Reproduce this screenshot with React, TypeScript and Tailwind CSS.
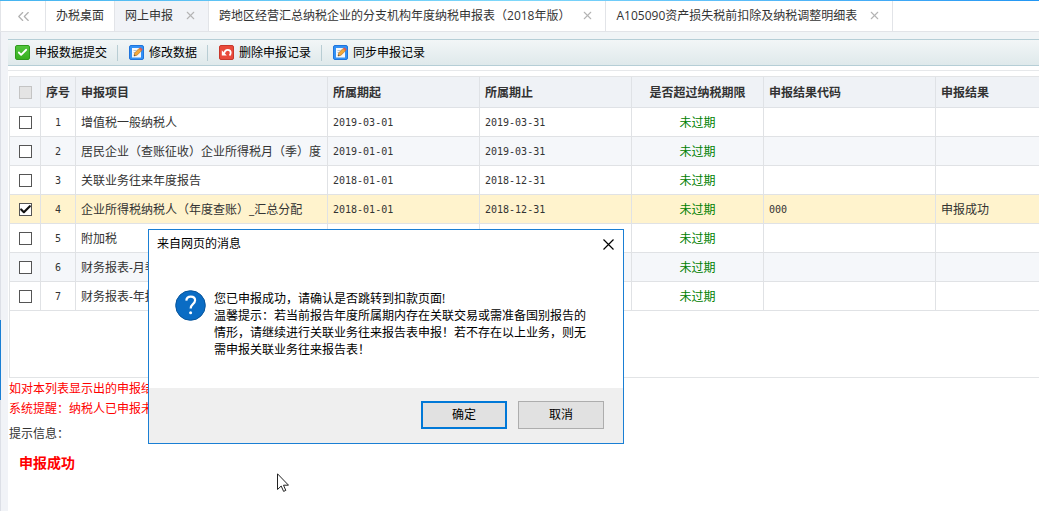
import { useState } from 'react';
import { Check, ChevronsLeft, X } from 'lucide-react';

const tabs = [
  { title: '办税桌面', closable: false },
  { title: '网上申报', closable: true },
  { title: '跨地区经营汇总纳税企业的分支机构年度纳税申报表（2018年版）', closable: true },
  { title: 'A105090资产损失税前扣除及纳税调整明细表', closable: true },
];

const rows = [
  { id: 1, name: '增值税一般纳税人', start: '2019-03-01', end: '2019-03-31', code: '', result: '' },
  { id: 2, name: '居民企业（查账征收）企业所得税月（季）度', start: '2019-01-01', end: '2019-03-31', code: '', result: '' },
  { id: 3, name: '关联业务往来年度报告', start: '2018-01-01', end: '2018-12-31', code: '', result: '' },
  { id: 4, name: '企业所得税纳税人（年度查账）_汇总分配', start: '2018-01-01', end: '2018-12-31', code: '000', result: '申报成功' },
  { id: 5, name: '附加税', start: '', end: '', code: '', result: '' },
  { id: 6, name: '财务报表-月季', start: '', end: '', code: '', result: '' },
  { id: 7, name: '财务报表-年报', start: '', end: '', code: '', result: '' },
];

function SubmitIcon() {
  return (
    <span className="flex w-[15px] h-[15px] items-center justify-center rounded-[2px] border border-[#2f9a1c] bg-gradient-to-b from-[#52c53c] to-[#36b01e]">
      <Check className="w-[11px] h-[11px] text-white" strokeWidth={4} />
    </span>
  );
}

function EditIcon() {
  return (
    <svg className="w-[15px] h-[15px]" viewBox="0 0 15 15" aria-hidden="true">
      <rect x="0.5" y="0.5" width="14" height="14" rx="1.5" fill="#3391f5" stroke="#1f74dc" />
      <rect x="3" y="3" width="9" height="9.5" fill="#f7f8fa" />
      <path d="M4.5 5.5h3M4.5 7.5h2" stroke="#b4c2d2" />
      <path d="M5 11l.7-3L10 3.500l2.500 2.300L8 10.200z" fill="#f4a93a" stroke="#a8691c" strokeWidth="0.6" />
      <path d="M10 3.500l1.200-1.200 2.500 2.300-1.200 1.200z" fill="#e2574c" />
      <path d="M5 11l.4-1.600 1.200 1.200z" fill="#444" />
    </svg>
  );
}

function DeleteIcon() {
  return (
    <svg className="w-[15px] h-[15px]" viewBox="0 0 15 15" aria-hidden="true">
      <rect x="0.5" y="0.5" width="14" height="14" rx="1.500" fill="#e94b3b" stroke="#c8382b" />
      <path d="M5 8.500c.7-2.600 2-3.700 3.700-3.700 1.900 0 3 1.300 3 3 0 1.100-.4 2-1.200 2.700" fill="none" stroke="#fff" strokeWidth="1.800" />
      <path d="M2.800 5.300v5.200h5z" fill="#fff" />
    </svg>
  );
}

const actions = [
  { label: '申报数据提交', icon: <SubmitIcon /> },
  { label: '修改数据', icon: <EditIcon /> },
  { label: '删除申报记录', icon: <DeleteIcon /> },
  { label: '同步申报记录', icon: <EditIcon /> },
];

function RowCheckbox({ label, checked, disabled, onChange }: { label: string; checked: boolean; disabled?: boolean; onChange?: () => void }) {
  return (
    <label className="relative block w-[13px] h-[13px] mx-auto">
      <input
        type="checkbox"
        aria-label={label}
        checked={checked}
        disabled={disabled}
        onChange={onChange}
        className="block w-[13px] h-[13px] appearance-none border border-[#555] bg-white disabled:border-[#c4c4c4] disabled:bg-[#e4e4e4]"
      />
      {checked && <Check className="absolute inset-0 w-[13px] h-[13px] text-[#111] pointer-events-none" strokeWidth={4} />}
    </label>
  );
}

function ConfirmDialog({ onClose }: { onClose: () => void }) {
  return (
    <div role="dialog" aria-label="来自网页的消息" className="absolute left-[148px] top-[229px] w-[476px] border border-[#1a7fd4] bg-white text-black">
      <div className="flex h-7 items-center justify-between pl-2 pr-[9px]">
        <h2>来自网页的消息</h2>
        <button onClick={onClose} aria-label="关闭" className="w-3 h-7 flex items-center justify-center">
          <svg className="w-[11px] h-[11px]" viewBox="0 0 11 11" aria-hidden="true">
            <path d="M0.500 0.500l10 10M10.500 0.500l-10 10" stroke="#000" strokeWidth="1.2" />
          </svg>
        </button>
      </div>
      <div className="flex h-[130px] gap-2 pl-[26px] pr-8 pt-8">
        <svg className="w-[31px] h-[31px] shrink-0" viewBox="0 0 31 31" aria-hidden="true">
          <circle cx="15.500" cy="15.500" r="14.800" fill="#0a6cc4" stroke="#07549b" />
          <path d="M11.300 10.600c.2-2.600 2-4 4.500-4 2.600 0 4.300 1.400 4.300 3.700 0 2-1.100 3-2.400 4.100-1.400 1.200-2 1.900-2 4.100" fill="none" stroke="#fff" strokeWidth="2.200" />
          <circle cx="15.600" cy="22.800" r="1.500" fill="#fff" />
        </svg>
        <p className="leading-[17px]">
          您已申报成功，请确认是否跳转到扣款页面!
          <br />
          温馨提示：若当前报告年度所属期内存在关联交易或需准备国别报告的情形，请继续进行关联业务往来报告表申报！若不存在以上业务，则无需申报关联业务往来报告表！
        </p>
      </div>
      <div className="flex h-[55px] items-center justify-end gap-[11px] bg-[#efefef] pr-[19px] pb-[2px]">
        <button onClick={onClose} className="w-[86px] h-7 border-2 border-[#0078d7] bg-[#e1e1e1]">确定</button>
        <button onClick={onClose} className="w-[86px] h-7 border border-[#adadad] bg-[#e1e1e1]">取消</button>
      </div>
    </div>
  );
}

export default function App() {
  const [activeTab, setActiveTab] = useState(1);
  const [selected, setSelected] = useState(4);
  const [dialogOpen, setDialogOpen] = useState(true);

  return (
    <div
      lang="zh-CN"
      className="relative flex flex-col min-h-screen overflow-hidden bg-white text-[12px] leading-4 text-[#333] font-['Open_Sans','Noto_Sans_CJK_SC',sans-serif]"
    >
      <div className="h-px bg-gradient-to-r from-[#45b4f0] via-[#7fd8fa] to-[#2196f3]" />

      {/* Tabs */}
      <nav className="flex h-[31px] border-b border-l border-[#e2e4e8]">
        <button aria-label="向左滚动" className="flex w-[45px] items-center justify-center border-r border-[#e2e4e8]">
          <ChevronsLeft className="w-[19px] h-[19px] text-[#b0b0b0]" strokeWidth={1.5} />
        </button>
        {tabs.map((tab, i) => (
          <div
            key={tab.title}
            className={`flex items-center border-r border-[#e2e4e8] pl-[10px] whitespace-nowrap ${i === activeTab ? 'bg-[#f1f3f7]' : 'bg-white'} ${tab.closable ? 'gap-[11px] pr-[11px]' : 'pr-[10px]'}`}
          >
            <button onClick={() => setActiveTab(i)}>{tab.title}</button>
            {tab.closable && (
              <button aria-label={`关闭 ${tab.title}`} className="pb-[2px]">
                <X className="w-[13px] h-[13px] text-[#b4b4b4]" strokeWidth={2} />
              </button>
            )}
          </div>
        ))}
      </nav>

      <div className="flex flex-1">
        <aside className="w-2 shrink-0 border-l border-[#dcdfe6] bg-[#f1f3f7]" />

        <main className="flex-1 min-w-0">
          <div className="h-[7px] bg-[#f0f4f6]" />

          {/* Toolbar */}
          <div className="flex h-[27px] items-center border-y border-[#b5ced6] bg-gradient-to-b from-[#f2f6f7] to-[#dfe9eb] text-black">
            {actions.map((action, i) => (
              <div key={action.label} className={`flex h-4 items-center pr-[10px] ${i === 0 ? 'pl-[7px]' : 'border-l border-[#b8cdd3] pl-[11px]'}`}>
                <button className="flex items-center gap-[5px]">
                  {action.icon}
                  {action.label}
                </button>
              </div>
            ))}
          </div>

          <div className="mt-1 h-[6px] border-t border-[#e6e8ea]" />

          {/* Declaration list */}
          <div className="ml-px min-h-[302px] border-b border-l border-t border-[#e2e4e6]">
            <table className="w-full table-fixed border-separate border-spacing-0 text-left">
              <colgroup>
                <col className="w-[31px]" />
                <col className="w-[35px]" />
                <col className="w-[252px]" />
                <col className="w-[152px]" />
                <col className="w-[152px]" />
                <col className="w-[132px]" />
                <col className="w-[172px]" />
                <col />
              </colgroup>
              <thead>
                <tr className="h-[31px] bg-[#eff2f6] *:border-b *:border-r *:last:border-r-0 *:border-[#dfe2e6] *:px-[5px] *:not-first:pt-[2px] *:whitespace-nowrap">
                  <th className="text-center"><RowCheckbox label="全选" checked={false} disabled /></th>
                  <th className="text-center">序号</th>
                  <th>申报项目</th>
                  <th>所属期起</th>
                  <th>所属期止</th>
                  <th className="text-center">是否超过纳税期限</th>
                  <th>申报结果代码</th>
                  <th>申报结果</th>
                </tr>
              </thead>
              <tbody>
                {rows.map((row) => (
                  <tr
                    key={row.id}
                    className={`h-[29px] *:border-b *:border-r *:last:border-r-0 *:border-[#e0e2e5] *:px-[5px] *:not-first:pt-[2px] *:whitespace-nowrap ${row.id === selected ? 'bg-[#fff3cd]' : row.id % 2 === 0 ? 'bg-[#f5f7fa]' : 'bg-white'}`}
                  >
                    <td>
                      <RowCheckbox label={row.name} checked={row.id === selected} onChange={() => setSelected(row.id)} />
                    </td>
                    <td className="text-center text-[10px] font-['DejaVu_Sans_Mono',monospace]">{row.id}</td>
                    <td>{row.name}</td>
                    <td className="text-[10px] font-['DejaVu_Sans_Mono',monospace]">{row.start}</td>
                    <td className="text-[10px] font-['DejaVu_Sans_Mono',monospace]">{row.end}</td>
                    <td className="text-center text-[#008000]">未过期</td>
                    <td className="text-[10px] font-['DejaVu_Sans_Mono',monospace]">{row.code}</td>
                    <td>{row.result}</td>
                  </tr>
                ))}
              </tbody>
            </table>
          </div>

          {/* Messages */}
          <div className="pl-px pt-px">
            <div className="leading-5 text-[#f00]">
              <p>如对本列表显示出的申报结</p>
              <p>系统提醒：纳税人已申报未</p>
            </div>
            <p className="mt-[7px]">提示信息：</p>
            <p className="mt-[11px] pl-[10px] text-[14px] leading-5 font-bold text-[#f00]">申报成功</p>
          </div>
        </main>
      </div>

      {/* Side panel handle */}
      <div className="absolute left-0 top-80 w-px h-20 bg-[#1a7fd4]" />

      {dialogOpen && <ConfirmDialog onClose={() => setDialogOpen(false)} />}

      {/* Mouse pointer */}
      <svg className="absolute left-[277px] top-[473px] w-3 h-[19px] pointer-events-none" viewBox="0 0 12 19" aria-hidden="true">
        <path d="M0.500 0.800v15.700l3.700-3.500 2.400 5.400 2.200-1-2.300-5.200h5z" fill="#fff" stroke="#222" />
      </svg>
    </div>
  );
}
